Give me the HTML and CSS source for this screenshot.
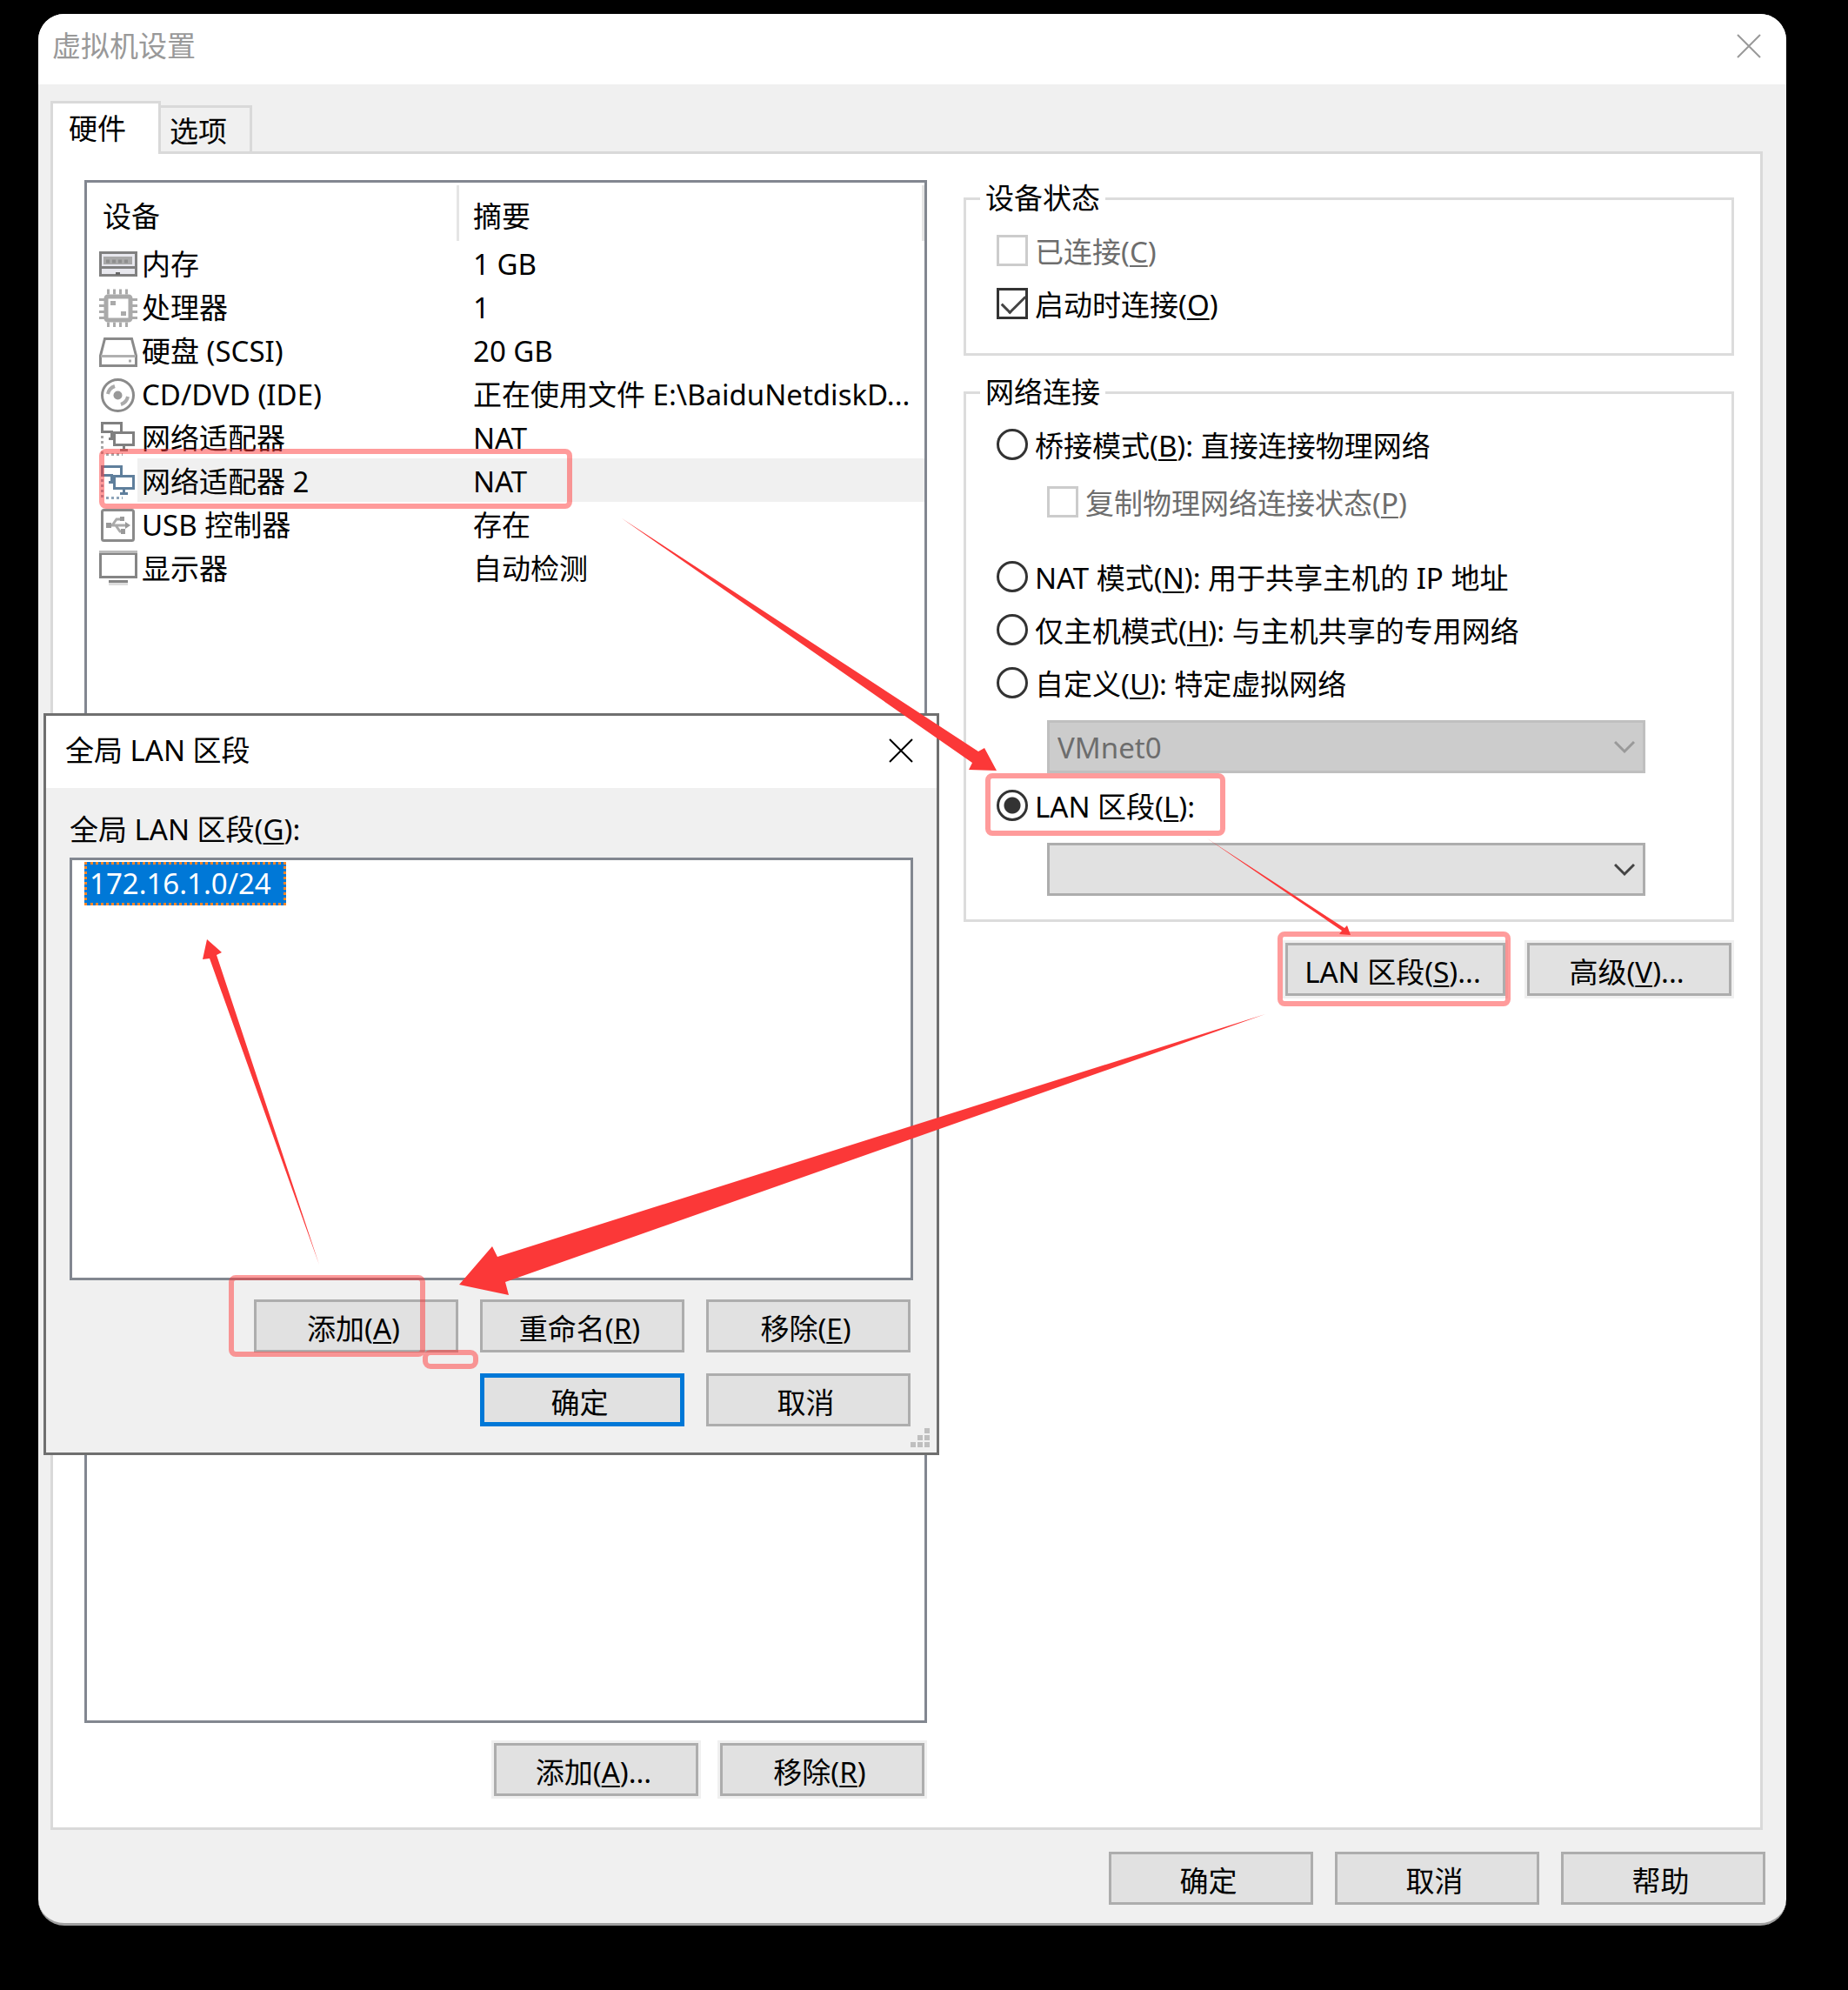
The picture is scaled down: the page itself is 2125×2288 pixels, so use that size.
FILE: index.html
```html
<!DOCTYPE html>
<html lang="zh-CN">
<head>
<meta charset="utf-8">
<title>虚拟机设置</title>
<link rel="stylesheet" href="styles.css">
</head>
<body>
<svg class="defs" aria-hidden="true">
  <symbol id="net" viewBox="0 0 44 44">
    <path fill="none" stroke="currentColor" stroke-width="3" d="M16 14.500H3.500V4.500H25.500V14M17.500 15.500H39.500V29.500H17.500ZM28.500 30V36M24 35.500H33M14.500 15V22M11 22.500H16"/>
    <path fill="none" stroke="currentColor" stroke-width="3" stroke-dasharray="3 3" opacity=".7" d="M3.500 19V42M8 40.500H27"/>
  </symbol>
  <symbol id="chevron" viewBox="0 0 24 16"><path fill="none" stroke="currentColor" stroke-width="3" d="M1 2L12 13L23 2"/></symbol>
  <symbol id="cross" viewBox="0 0 28 28"><path fill="none" stroke="currentColor" stroke-width="2" d="M1 1L27 27M27 1L1 27"/></symbol>
</svg>
<div class="stage">
  <main class="window">
    <header class="titlebar">
      <h1>虚拟机设置</h1>
      <button class="close" aria-label="关闭"><svg><use href="#cross"/></svg></button>
    </header>
    <div class="tabs" role="tablist">
      <button class="tab active" role="tab" aria-selected="true">硬件</button>
      <button class="tab" role="tab" aria-selected="false">选项</button>
    </div>
    <div class="pane" role="tabpanel">
      <section class="hardware">
        <div class="device-list">
          <table>
            <colgroup><col class="c-icon"><col class="c-name"><col></colgroup>
            <thead><tr><th colspan="2">设备</th><th>摘要</th></tr></thead>
            <tbody>
              <tr>
                <td><svg class="icon" viewBox="0 0 44 44"><rect x="1.500" y="8.500" width="41" height="26" fill="#e8e8ee" stroke="#808080" stroke-width="3"/><path stroke="#a8a8a8" stroke-width="9" d="M5 17.500H38"/><path stroke="#8e8e8e" stroke-width="4" stroke-dasharray="4 3" d="M8 18.500H36"/><path stroke="#808080" stroke-width="3" d="M1 25.500H43"/><path stroke="#666" stroke-width="3" d="M19 32.500H24"/></svg></td>
                <td>内存</td><td>1 GB</td>
              </tr>
              <tr>
                <td><svg class="icon" viewBox="0 0 44 44"><path stroke="#aaa" stroke-width="6" stroke-dasharray="3 4" d="M9 3.500H35M9 41.500H35M3 11V35M41 11V35"/><rect x="8" y="9" width="28" height="27" rx="2" fill="#fff" stroke="#aaa" stroke-width="5"/><path fill="#aaa" d="M13 14h6v5h-6zM25 26h6v5h-6z"/></svg></td>
                <td>处理器</td><td>1</td>
              </tr>
              <tr>
                <td><svg class="icon" viewBox="0 0 44 44"><path fill="#fff" stroke="#8a8a8a" stroke-width="3" d="M6.500 7.500H37.500L42.500 27V38.500H1.500V27Z"/><path fill="none" stroke="#b0b0b0" stroke-width="3" d="M2 27.500H42"/><path stroke="#aaa" stroke-width="3" d="M34 33H37"/></svg></td>
                <td>硬盘 (SCSI)</td><td>20 GB</td>
              </tr>
              <tr>
                <td><svg class="icon" viewBox="0 0 44 44"><circle cx="21.500" cy="22.500" r="18" fill="#fff" stroke="#8a8a8a" stroke-width="3"/><circle cx="21.500" cy="22.500" r="5" fill="#999"/><path fill="none" stroke="#aaa" stroke-width="4" d="M10 21A12 12 0 0 1 18 12M33 24A12 12 0 0 1 25 33"/></svg></td>
                <td>CD/DVD (IDE)</td><td>正在使用文件 E:\BaiduNetdiskD...</td>
              </tr>
              <tr>
                <td><svg class="icon net"><use href="#net"/></svg></td>
                <td>网络适配器</td><td>NAT</td>
              </tr>
              <tr class="selected">
                <td><svg class="icon net"><use href="#net"/></svg></td>
                <td>网络适配器 2</td><td>NAT</td>
              </tr>
              <tr>
                <td><svg class="icon" viewBox="0 0 44 44"><rect x="3.500" y="4.500" width="36" height="35" rx="2" fill="#fff" stroke="#8a8a8a" stroke-width="3"/><path fill="none" stroke="#aaa" stroke-width="3" d="M10 22H33M15 22L20 15H25M19 22L24 29H27"/><path fill="#999" d="M8 19h6v6H8zM24 12h5v5h-5zM25 26h5v6h-5zM30 18l6 4l-6 4z"/></svg></td>
                <td>USB 控制器</td><td>存在</td>
              </tr>
              <tr>
                <td><svg class="icon" viewBox="0 0 44 44"><rect x="1.500" y="4.500" width="41" height="27" fill="#fff" stroke="#858585" stroke-width="3"/><path stroke="#bbb" stroke-width="3" d="M0 2.500H44"/><path stroke="#858585" stroke-width="3" d="M11 36.500H33"/><path stroke="#ddd" stroke-width="3" d="M11 39.500H33"/></svg></td>
                <td>显示器</td><td>自动检测</td>
              </tr>
            </tbody>
          </table>
        </div>
        <div class="actions">
          <button class="btn haloed">添加(<u>A</u>)...</button>
          <button class="btn haloed">移除(<u>R</u>)</button>
        </div>
      </section>
      <section class="settings">
        <fieldset class="status">
          <legend>设备状态</legend>
          <div class="options">
            <label class="disabled"><input type="checkbox" disabled><span>已连接(<u>C</u>)</span></label>
            <label><input type="checkbox" checked><span>启动时连接(<u>O</u>)</span></label>
          </div>
        </fieldset>
        <fieldset class="network">
          <legend>网络连接</legend>
          <div class="options">
            <label><input type="radio" name="net"><span>桥接模式(<u>B</u>): 直接连接物理网络</span></label>
            <label class="disabled nested"><input type="checkbox" disabled><span>复制物理网络连接状态(<u>P</u>)</span></label>
            <label class="spaced"><input type="radio" name="net"><span>NAT 模式(<u>N</u>): 用于共享主机的 IP 地址</span></label>
            <label><input type="radio" name="net"><span>仅主机模式(<u>H</u>): 与主机共享的专用网络</span></label>
            <label><input type="radio" name="net"><span>自定义(<u>U</u>): 特定虚拟网络</span></label>
            <div class="combo disabled"><select aria-label="特定虚拟网络" disabled><option>VMnet0</option></select><svg><use href="#chevron"/></svg></div>
            <label class="tight"><input type="radio" name="net" checked><span>LAN 区段(<u>L</u>):</span></label>
            <div class="combo"><select aria-label="LAN 区段"><option></option></select><svg><use href="#chevron"/></svg></div>
          </div>
        </fieldset>
        <div class="actions">
          <button class="btn haloed wide">LAN 区段(<u>S</u>)...</button>
          <button class="btn haloed">高级(<u>V</u>)...</button>
        </div>
      </section>
    </div>
    <footer class="footer">
      <button class="btn">确定</button>
      <button class="btn">取消</button>
      <button class="btn">帮助</button>
    </footer>
  </main>

  <div class="dialog" role="dialog" aria-labelledby="dialog-title">
    <header class="titlebar">
      <h2 id="dialog-title">全局 LAN 区段</h2>
      <button class="close" aria-label="关闭"><svg><use href="#cross"/></svg></button>
    </header>
    <div class="dialog-body">
      <div class="list-label" id="segments-label">全局 LAN 区段(<u>G</u>):</div>
      <ul class="segments" role="listbox" aria-labelledby="segments-label">
        <li role="option" aria-selected="true">172.16.1.0/24</li>
      </ul>
      <div class="dialog-buttons">
        <button class="btn">添加(<u>A</u>)</button>
        <button class="btn">重命名(<u>R</u>)</button>
        <button class="btn">移除(<u>E</u>)</button>
        <button class="btn primary">确定</button>
        <button class="btn">取消</button>
      </div>
    </div>
    <svg class="grip" viewBox="0 0 24 24"><path fill="#bfbfbf" d="M17 0h6v6h-6zM17 8h6v6h-6zM9 8h6v6H9zM17 16h6v6h-6zM9 16h6v6H9zM1 16h6v6H1z"/></svg>
  </div>

  <svg class="marks" viewBox="0 0 2125 2288" aria-hidden="true">
    <g class="frames">
      <rect x="117" y="519" width="538" height="63" rx="5"/>
      <rect x="1136" y="892" width="270" height="66" rx="5"/>
      <rect x="1472" y="1074" width="262" height="80" rx="5"/>
      <rect x="266" y="1469" width="220" height="88" rx="5"/>
      <rect x="489" y="1555" width="58" height="16" rx="6"/>
    </g>
    <g class="arrows">
      <path d="M715 596L1125 864L1132 860L1146 886L1114 885L1118 877Z"/>
      <path d="M1388 964L1546 1067L1549 1064L1553 1075L1540 1074L1543 1070Z"/>
      <path d="M1455 1166L572 1445L566 1433L528 1477L585 1489L581 1474Z"/>
      <path d="M367 1454L249 1098L255 1095L238 1080L233 1103L241 1102Z"/>
    </g>
  </svg>
</div>
</body>
</html>
```
FILE: styles.css
```css
* { box-sizing: border-box; }

body {
  margin: 0;
  background: #000;
  color: #000;
  font: 33px/36px "Noto Sans", "Noto Sans CJK SC", sans-serif;
}

button, select, input { font: inherit; color: inherit; margin: 0; }
h1, h2 { margin: 0; font: inherit; }
u { text-decoration-thickness: 2px; text-underline-offset: 3px; }
.defs { position: absolute; width: 0; height: 0; }

.stage {
  position: relative;
  display: flex;
  min-height: 100vh;
  padding: 16px 71px 74px 44px;
}

.window {
  flex: 1;
  display: flex;
  flex-direction: column;
  background: #f0f0f0;
  border-bottom: 3px solid #a0a0a0;
  border-radius: 30px;
  overflow: hidden;
}

.titlebar {
  display: flex;
  align-items: center;
  justify-content: space-between;
  background: #fff;
}
.window > .titlebar { height: 81px; padding: 0 29px 7px 16px; color: #999; }

.close {
  display: flex;
  padding: 0;
  border: 0;
  background: none;
}
.close svg { width: 28px; height: 28px; }

/* tabs */
.tabs {
  display: flex;
  align-items: flex-end;
  padding: 19px 14px 0;
}
.tab {
  height: 53px;
  padding: 3px 26px 0 10px;
  border: 3px solid #d9d9d9;
  border-width: 3px 3px 0 0;
  background: #f0f0f0;
}
.tab.active {
  position: relative;
  z-index: 1;
  height: 61px;
  margin-bottom: -3px;
  padding: 0 37px 0 18px;
  border-width: 3px 3px 0 3px;
  background: #fff;
}

.pane {
  flex: 1;
  display: grid;
  grid-template-columns: 969fr 886fr;
  gap: 42px;
  margin: 0 27px 0 14px;
  padding: 30px 30px 36px 36px;
  border: 3px solid #d9d9d9;
  background: #fff;
}

/* device list */
.hardware { display: flex; flex-direction: column; gap: 23px; }
.device-list {
  flex: 1;
  border: 3px solid #828790;
}
table { width: 100%; table-layout: fixed; border-collapse: collapse; }
.c-icon { width: 58px; }
.c-name { width: 370px; }
th {
  height: 67px;
  padding: 10px 0 0 18px;
  font-weight: normal;
  text-align: left;
  background: linear-gradient(#e5e5e5, #e5e5e5) right bottom / 3px 64px no-repeat;
}
th + th { padding-left: 16px; }
td {
  height: 50px;
  padding: 4px 0 0 5px;
  line-height: 46px;
  white-space: nowrap;
}
td:first-child { padding: 3px 0 0 14px; }
td:last-child { padding-left: 16px; }
.selected td + td { background: #f0f0f0; }
.icon { display: block; width: 44px; height: 44px; color: #808080; }
.selected .icon { color: #5f7f9c; }

/* buttons */
.actions { display: flex; justify-content: flex-end; gap: 25px; padding-right: 3px; }
.btn {
  width: 235px;
  height: 61px;
  padding: 7px 6px 0 0;
  border: 3px solid #adadad;
  background: #e1e1e1;
  text-align: center;
}
.btn.wide { width: 253px; }
.btn.haloed { box-shadow: 0 0 0 3px #f0f0f0; }
.btn.primary { border: 5px solid #0078d7; }
.footer {
  display: flex;
  justify-content: flex-end;
  gap: 25px;
  padding: 25px 24px 21px;
}

/* settings */
.settings { padding-top: 3px; }
fieldset {
  min-width: 0;
  margin: 0 0 24px;
  padding: 0 16px;
  border: 3px solid #dcdcdc;
}
legend { padding: 0 6px; }
.options {
  display: flex;
  flex-direction: column;
  gap: 25px;
  padding: 24px 19px 39px;
}
label { display: flex; align-items: center; gap: 8px; height: 36px; white-space: nowrap; }
label span { padding-top: 3px; }
label.disabled { color: #6d6d6d; }
.network .options { padding-bottom: 27px; }
.nested { margin: 5px 0 0 58px; }
.spaced { margin-top: 25px; }
.tight { margin-top: -6px; }

input {
  appearance: none;
  flex: none;
  width: 36px;
  height: 36px;
  border: 3px solid #333;
  background: #fff;
}
input:disabled { border-color: #ccc; }
input[type="radio"] { border-radius: 50%; }
input[type="radio"]:checked { background: radial-gradient(circle, #333 9px, #fff 10px); }
input[type="checkbox"]:checked::after {
  content: "";
  display: block;
  width: 24px;
  height: 12px;
  margin: 5px 0 0 3px;
  border: solid #444;
  border-width: 0 0 3px 3px;
  transform: rotate(-45deg);
}

.combo { display: grid; align-items: center; margin: 0 64px 0 58px; }
.combo select {
  grid-area: 1 / 1;
  appearance: none;
  width: 100%;
  height: 61px;
  padding: 2px 9px 0;
  border: 3px solid #adadad;
  border-radius: 0;
  background: #e1e1e1;
}
.combo.disabled select { border-color: #bfbfbf; background: #ccc; color: #6d6d6d; opacity: 1; }
.combo svg {
  grid-area: 1 / 1;
  justify-self: end;
  width: 24px;
  height: 16px;
  margin-right: 12px;
  color: #444;
  pointer-events: none;
}
.combo.disabled svg { color: #999; }

/* floating dialog */
.dialog {
  position: absolute;
  left: 50px;
  top: 820px;
  width: 1030px;
  border: 3px solid #6f6f6f;
  background: #f0f0f0;
}
.dialog .titlebar { height: 83px; padding: 0 27px 4px 22px; }
.dialog-body { padding: 30px 27px 30px 27px; }
.list-label { height: 50px; }
.segments {
  height: 486px;
  margin: 0;
  padding: 2px 14px;
  border: 3px solid #828790;
  background: #fff;
  list-style: none;
}
.segments li {
  width: fit-content;
  padding: 4px 14px 4px 3px;
  border: 3px dotted #ff8728;
  background: #0078d7;
  color: #fff;
}
.dialog-buttons {
  display: flex;
  flex-wrap: wrap;
  justify-content: flex-end;
  gap: 24px 25px;
  padding: 22px 3px 0 0;
}
.grip { position: absolute; right: 7px; bottom: 4px; width: 24px; height: 24px; }

/* red frames and arrows drawn over the windows */
.marks {
  position: absolute;
  left: 0;
  top: 0;
  width: 2125px;
  height: 2288px;
  pointer-events: none;
}
.frames { fill: none; stroke: #ff3838; stroke-opacity: .5; stroke-width: 6; }
.arrows { fill: #fb3838; }
```
